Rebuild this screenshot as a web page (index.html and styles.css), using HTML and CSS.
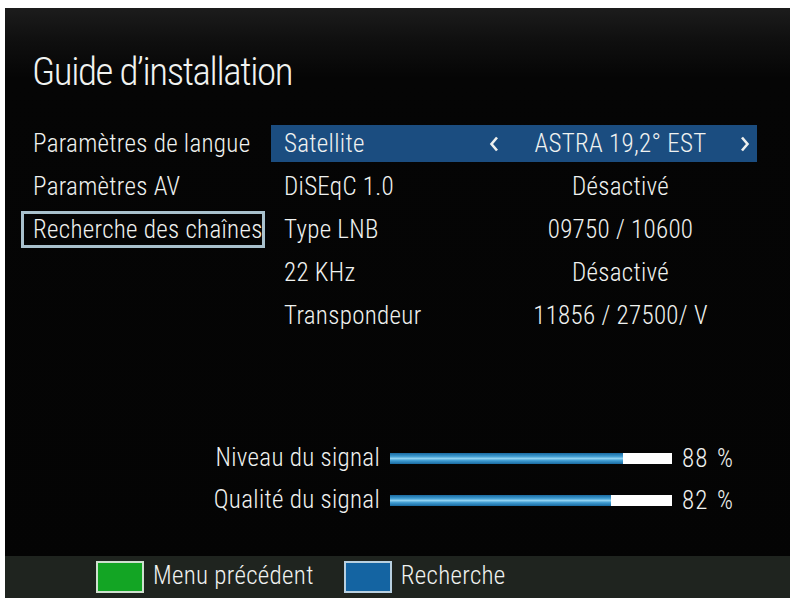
FILE: index.html
```html
<!DOCTYPE html>
<html lang="fr">
<head>
<meta charset="utf-8">
<title>Guide d'installation</title>
<link rel="stylesheet" href="styles.css">
</head>
<body>
<div class="screen">
  <h1 class="title">Guide d’installation</h1>
  <div class="main">
    <ul class="menu">
      <li class="menu-item">Paramètres de langue</li>
      <li class="menu-item">Paramètres AV</li>
      <li class="menu-item focused">Recherche des chaînes</li>
    </ul>
    <div class="panel">
      <div class="row selected">
        <span class="label">Satellite</span>
        <span class="value">
          <svg class="arrow" viewBox="0 0 10 16" width="10" height="16"><polyline points="8,1.5 2.5,8 8,14.5" fill="none" stroke="#eef0ee" stroke-width="2.6" stroke-linejoin="miter"/></svg>
          <span class="val-text">ASTRA 19,2° EST</span>
          <svg class="arrow" viewBox="0 0 10 16" width="10" height="16"><polyline points="2,1.5 7.5,8 2,14.5" fill="none" stroke="#eef0ee" stroke-width="2.6" stroke-linejoin="miter"/></svg>
        </span>
      </div>
      <div class="row">
        <span class="label">DiSEqC 1.0</span>
        <span class="value"><span class="val-text">Désactivé</span></span>
      </div>
      <div class="row">
        <span class="label">Type LNB</span>
        <span class="value"><span class="val-text">09750 / 10600</span></span>
      </div>
      <div class="row">
        <span class="label">22 KHz</span>
        <span class="value"><span class="val-text">Désactivé</span></span>
      </div>
      <div class="row">
        <span class="label">Transpondeur</span>
        <span class="value"><span class="val-text">11856 / 27500/ V</span></span>
      </div>
    </div>
  </div>
  <div class="signals">
    <span class="sig-label">Niveau du signal</span>
    <div class="bar"><div class="fill" style="width:82.5%"></div></div>
    <span class="sig-pct">88 %</span>
    <span class="sig-label">Qualité du signal</span>
    <div class="bar"><div class="fill" style="width:78.5%"></div></div>
    <span class="sig-pct">82 %</span>
  </div>
  <div class="footer">
    <span class="key key-green"></span>
    <span class="key-label">Menu précédent</span>
    <span class="key key-blue"></span>
    <span class="key-label">Recherche</span>
  </div>
</div>
</body>
</html>
```

FILE: styles.css
```css
html, body {
  margin: 0;
  padding: 0;
  background: #ffffff;
}

body {
  font-family: "Roboto Condensed", "Roboto", "DejaVu Sans Condensed", sans-serif;
  font-stretch: condensed;
  font-weight: 300;
  color: #f0f2f0;
}

.screen {
  margin: 8px 2px 0 5px;
  width: 785px;
  height: 590px;
  background: linear-gradient(to bottom, #1c1c1c 0px, #101010 30px, #050505 70px, #040404 100%);
  display: flex;
  flex-direction: column;
  letter-spacing: 0.3px;
}

.title {
  margin: 0;
  padding: 38px 0 0 27px;
  height: 60px;
  font-size: 39px;
  font-weight: 300;
  line-height: 52px;
  letter-spacing: -1.4px;
}

.main {
  display: flex;
  gap: 6px;
  padding: 19px 0 0 16px;
}

.menu {
  list-style: none;
  margin: 0;
  padding: 0;
  width: 244px;
  display: flex;
  flex-direction: column;
  gap: 6px;
}

.menu-item {
  height: 37px;
  line-height: 37px;
  padding-left: 12px;
  font-size: 25px;
  box-sizing: border-box;
  white-space: nowrap;
}

.menu-item.focused {
  border: 3px solid #a9c1cd;
  padding-left: 9px;
  line-height: 31px;
}

.panel {
  width: 486px;
  display: flex;
  flex-direction: column;
  gap: 6px;
}

.row {
  height: 37px;
  display: flex;
  align-items: center;
  font-size: 25px;
}

.row.selected {
  background: #1b4d80;
}

.label {
  width: 209px;
  flex: none;
  padding-left: 13px;
  box-sizing: border-box;
  white-space: nowrap;
}

.value {
  flex: 1;
  display: grid;
  grid-template-columns: 24px 1fr 20px;
  align-items: center;
  padding: 0 2px 0 2px;
  white-space: nowrap;
}

.val-text {
  grid-column: 2;
  text-align: center;
}

.arrow {
  display: block;
  justify-self: center;
}

.signals {
  display: grid;
  grid-template-columns: 200px 282px auto;
  column-gap: 10px;
  align-items: center;
  margin: 103px 0 0 175px;
  font-size: 25px;
}

.sig-label {
  text-align: right;
  height: 42px;
  line-height: 42px;
  white-space: nowrap;
}

.sig-pct {
  white-space: nowrap;
  letter-spacing: 1px;
  word-spacing: 2px;
}

.bar {
  height: 11px;
  background: #ffffff;
}

.fill {
  height: 100%;
  background: linear-gradient(to bottom, #1a6aa0 0%, #3d9ad0 30%, #8fd2f2 50%, #3d9ad0 70%, #1a6aa0 100%);
}

.footer {
  margin-top: auto;
  height: 42px;
  background: #1f241f;
  display: flex;
  align-items: center;
  padding-left: 91px;
  font-size: 25px;
}

.key {
  width: 44px;
  height: 28px;
  border: 2px solid #cfe0cf;
  flex: none;
}

.key-green {
  background: #13a524;
}

.key-blue {
  background: #1464a2;
  border-color: #b8d0e0;
}

.key-label {
  margin: 0 30px 0 9px;
  padding-bottom: 4px;
}
```
